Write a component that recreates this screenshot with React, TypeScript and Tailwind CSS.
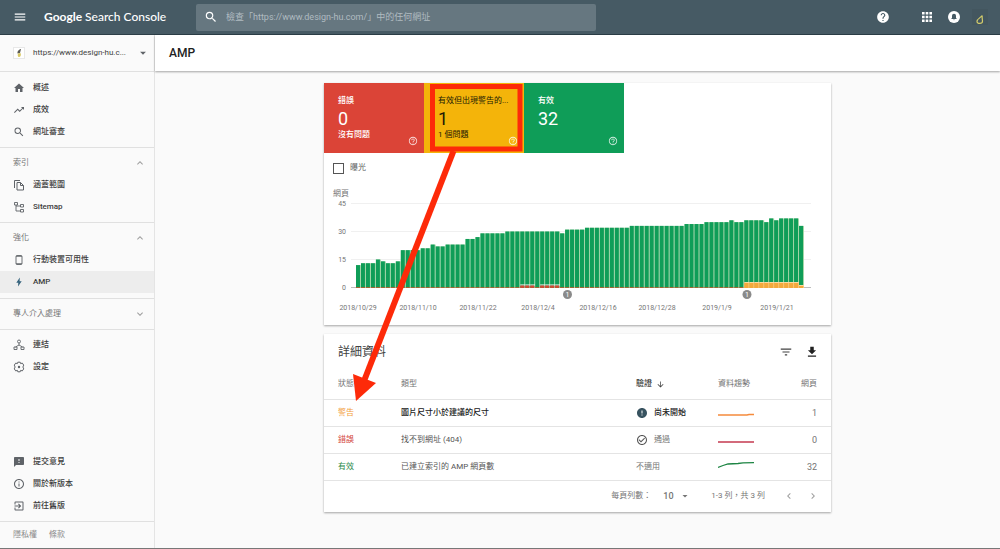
import type { ReactNode } from 'react'
import {
	MdArrowDownward,
	MdArrowDropDown,
	MdCheckCircleOutline,
	MdChevronLeft,
	MdChevronRight,
	MdError,
	MdExitToApp,
	MdExpandLess,
	MdExpandMore,
	MdFeedback,
	MdFileDownload,
	MdFilterList,
	MdHelp,
	MdHelpOutline,
	MdHome,
	MdInfoOutline,
	MdMenu,
	MdSearch,
	MdTrendingUp,
} from 'react-icons/md'

const repeat = (value: number, times: number) => Array<number>(times).fill(value)

// Total pages per day, 2018/10/29 - 2019/1/26
const totals = [
	12, 13, 13, 13, 15, 14, 13, 13, 14,
	...repeat(20, 4), ...repeat(21, 2), 23, 22, 22, ...repeat(23, 4),
	26, 26, 27, ...repeat(29, 5), ...repeat(30, 11), 29,
	...repeat(31, 4), ...repeat(32, 9), ...repeat(33, 11), ...repeat(34, 4),
	...repeat(35, 5), 36, 35, 35, ...repeat(36, 4), 35, 37, 36, ...repeat(37, 4), 33,
]

const errorDays = [33, 34, 35, 37, 38, 39, 40]
const FIRST_WARNING_DAY = 78

const dateLabels = [
	{ x: 34, text: '2018/10/29' },
	{ x: 94, text: '2018/11/10' },
	{ x: 154, text: '2018/11/22' },
	{ x: 214, text: '2018/12/4' },
	{ x: 274, text: '2018/12/16' },
	{ x: 333, text: '2018/12/28' },
	{ x: 393, text: '2019/1/9' },
	{ x: 453, text: '2019/1/21' },
]

const SitemapIcon = () => (
	<svg viewBox="0 0 12 12" className="h-3 w-3" fill="none" stroke="currentColor" strokeWidth="0.9">
		<path d="M1.5 1.5h3v2.5h-3zM7.5 3.5h3v2.5h-3zM7.5 8.5h3v2.5h-3zM3 4v6h4.5M3 5h4.5" />
	</svg>
)

const CoverageIcon = () => (
	<svg viewBox="0 0 12 12" className="h-3 w-3" fill="none" stroke="currentColor" strokeWidth="1">
		<path d="M1.5 9V1.5H7M4 3.5h3.5L10.5 6.500v4.500H4zM7.500 3.500v3h3" />
	</svg>
)

const PhoneIcon = () => (
	<svg viewBox="0 0 12 12" className="h-3 w-3" fill="none" stroke="currentColor" strokeWidth="0.9">
		<rect x="3" y="1.500" width="6" height="9" rx="1" />
		<path d="M3 2.300h6M3 9.700h6" />
	</svg>
)

const BoltIcon = () => (
	<svg viewBox="0 0 12 12" className="h-3 w-3 text-[#34627c]" fill="currentColor">
		<path d="M6.800 1.500 3.300 6.700h2L5 10.500 8.700 5.300H6.600z" />
	</svg>
)

const LinksIcon = () => (
	<svg viewBox="0 0 12 12" className="h-3 w-3" fill="none" stroke="currentColor" strokeWidth="0.9">
		<circle cx="6" cy="2.500" r="1.500" />
		<path d="M1 8h3v2.500H1zM8 8h3v2.500H8zM6 4v2.200M2.500 8 6 6l3.500 2" />
	</svg>
)

const SettingsIcon = () => (
	<svg viewBox="0 0 12 12" className="h-3 w-3" fill="none" stroke="currentColor" strokeWidth="1">
		<path d="M4.800 1.200h2.400l.4 1.400 1.700-.5 1.400 2L9.900 6l.8 1.900-1.400 2-1.700-.5-.4 1.400H4.800l-.4-1.400-1.700.5-1.400-2L2.100 6l-.8-1.900 1.400-2 1.700.5z" />
		<circle cx="6" cy="6" r="1.200" fill="currentColor" stroke="none" />
	</svg>
)

interface NavItemProps {
	icon: ReactNode
	label: string
	active?: boolean
}

const NavItem = ({ icon, label, active = false }: NavItemProps) => (
	<a
		href="#"
		className={`flex h-[22px] items-center gap-2 pl-[13px] font-medium text-[#3c3c3c] ${active ? 'bg-[#ededed]' : ''}`}
	>
		<span className="flex w-3 justify-center text-[#5f6368]">{icon}</span>
		{label}
	</a>
)

const NavHeading = ({ label, open = true }: { label: string; open?: boolean }) => (
	<button className="flex h-[22px] w-full items-center justify-between pl-[13px] pr-2 text-[#757575]">
		{label}
		{open
			? <MdExpandLess className="h-3 w-3 text-[#9e9e9e]" />
			: <MdExpandMore className="h-3 w-3 text-[#9e9e9e]" />}
	</button>
)

interface TileProps {
	title: string
	count: number
	note?: string
	className: string
}

const Tile = ({ title, count, note, className }: TileProps) => (
	<button className={`relative flex h-[70px] w-[100px] flex-col px-[14px] pt-3 text-left ${className}`}>
		<span className="whitespace-nowrap leading-3">{title}</span>
		<span className="text-lg font-normal leading-6">{count}</span>
		<span className="leading-2">{note}</span>
		<MdHelpOutline className="absolute bottom-[7px] right-[6px] h-[10px] w-[10px] text-white/80" />
	</button>
)

const Chart = () => {
	const barWidth = 448 / totals.length
	const unit = 84 / 45

	return (
		<svg viewBox="0 0 507 125" className="block w-full" fontFamily="Roboto, sans-serif" fontSize="7" fill="#757575">
			{[45, 30, 15, 0].map((tick) => (
				<g key={tick}>
					<line x1="27" x2="487" y1={87.5 - tick * unit} y2={87.5 - tick * unit} stroke={tick ? '#f0f0f0' : '#bdbdbd'} />
					<text x="22" y={90 - tick * unit} textAnchor="end">{tick}</text>
				</g>
			))}
			{totals.map((total, i) => {
				const x = 32 + i * barWidth
				const hasError = errorDays.includes(i)
				const warning = i < FIRST_WARNING_DAY ? 0 : i === totals.length - 1 ? 2 : 5
				return (
					<g key={i}>
						<rect x={x} y={87.5 - total * unit} width={barWidth} height={total * unit} fill="#a5d6a7" />
						<rect x={x} y={87.5 - total * unit} width={barWidth - 1} height={total * unit} fill="#0f9d58" />
						<rect x={x} y="87" width={barWidth - 1} height="1" fill="#a1662f" />
						{hasError && <rect x={x} y="84.5" width={barWidth} height="1" fill="#fff" />}
						{hasError && <rect x={x} y="85.5" width={barWidth - 0.9} height="2" fill="#db4437" />}
						{warning > 0 && <rect x={x} y={87 - warning} width={barWidth} height={warning + 1} fill="#fbd9a0" />}
						{warning > 0 && <rect x={x} y={88 - warning} width={barWidth - 0.6} height={warning} fill="#f4a93c" />}
					</g>
				)
			})}
			{[243.5, 423].map((x) => (
				<g key={x}>
					<circle cx={x} cy="94.5" r="4.500" fill="#8a8a8a" />
					<text x={x} y="97" textAnchor="middle" fill="#fff">1</text>
				</g>
			))}
			{dateLabels.map((label) => (
				<text key={label.text} x={label.x} y="110" textAnchor="middle">{label.text}</text>
			))}
		</svg>
	)
}

const Trend = ({ color, points }: { color: string; points: string }) => (
	<svg viewBox="0 0 36 10" className="block h-[10px] w-9" fill="none">
		<polyline points={points} stroke={color} strokeWidth="1.300" />
	</svg>
)

const rows = [
	{
		status: '警告',
		statusClass: 'text-[#f29c38]',
		type: '圖片尺寸小於建議的尺寸',
		typeClass: 'font-medium text-[#212121]',
		check: <><MdError className="h-3 w-3 text-[#37525f]" /><span className="font-medium text-[#212121]">尚未開始</span></>,
		trend: <Trend color="#f58b3c" points="0,7 29,7 31,6.500 36,6.500" />,
		pages: 1,
	},
	{
		status: '錯誤',
		statusClass: 'text-[#d3453c]',
		type: '找不到網址 (404)',
		typeClass: 'text-[#555]',
		check: <><MdCheckCircleOutline className="h-3 w-3 text-[#555]" />通過</>,
		trend: <Trend color="#c5394f" points="0,7 36,7" />,
		pages: 0,
	},
	{
		status: '有效',
		statusClass: 'text-[#2c8a4b]',
		type: '已建立索引的 AMP 網頁數',
		typeClass: 'text-[#555]',
		check: '不適用',
		trend: <Trend color="#1e8544" points="0,5.500 5,3.500 10,2 20,1.500 25,.8 36,.7" />,
		pages: 32,
	},
]

const TopBar = () => (
	<header className="flex h-[35px] shrink-0 items-center border-b border-[#2c3e47] bg-[#465a64] text-white">
		<button aria-label="選單" className="ml-[13px] w-[14px]">
			<MdMenu className="h-[14px] w-[14px]" />
		</button>
		<h1 className="ml-[17px] w-[152px] whitespace-nowrap font-[Lato] text-xs font-bold">
			Google <span className="font-medium">Search Console</span>
		</h1>
		<label className="flex h-[27px] max-w-[400px] flex-1 items-center gap-2 rounded-xs bg-[#667780] pl-2">
			<MdSearch className="h-[14px] w-[14px]" />
			<input
				type="search"
				aria-label="檢查網址"
				placeholder="檢查「https://www.design-hu.com/」中的任何網址"
				className="flex-1 bg-transparent text-[9px] outline-none placeholder:text-[#b0bbc0]"
			/>
		</label>
		<div className="ml-auto flex items-center pr-3">
			<button aria-label="說明"><MdHelp className="h-[14px] w-[14px]" /></button>
			<button aria-label="應用程式" className="ml-8">
				<svg viewBox="0 0 10 10" className="h-[10px] w-[10px]" fill="currentColor">
					<path d="M0 0h2.600v2.600H0zM3.700 0h2.600v2.600H3.700zM7.400 0H10v2.600H7.400zM0 3.700h2.600v2.600H0zM3.700 3.700h2.600v2.600H3.700zM7.400 3.700H10v2.600H7.400zM0 7.400h2.600V10H0zM3.700 7.400h2.600V10H3.700zM7.400 7.400H10V10H7.400z" />
				</svg>
			</button>
			<button aria-label="通知" className="ml-4">
				<svg viewBox="0 0 12 12" className="h-3 w-3">
					<circle cx="6" cy="6" r="6" fill="#fff" />
					<path d="M6 2.700a2 2 0 0 1 2 2v2.200l.8.800v.4H3.200v-.4l.8-.8V4.700a2 2 0 0 1 2-2zM5.300 8.500h1.400a.7.700 0 0 1-1.400 0z" fill="#465a64" />
				</svg>
			</button>
			<button aria-label="帳戶" className="ml-3">
				<svg viewBox="0 0 16 16" className="h-4 w-4">
					<rect width="16" height="16" fill="#43565f" />
					<path d="M10.200 6.500C9 8.500 5 9.800 5 12.500c0 2.800 5.500 2.500 5.500-.3 0-1.700-.6-3.200-.3-5.700" fill="none" stroke="#d3cc6b" strokeWidth="1.200" />
				</svg>
			</button>
		</div>
	</header>
)

const Sidebar = () => (
	<nav className="flex w-[155px] shrink-0 flex-col border-r border-[#e4e4e4] bg-[#fafafa]">
		<button className="flex h-[37px] items-center border-b border-[#e0e0e0] pl-[13px] pr-1 text-[#424242]">
			<svg viewBox="0 0 12 12" className="mr-2 h-3 w-3">
				<rect x=".5" y=".5" width="11" height="11" fill="#fff" stroke="#e8e8e8" />
				<path d="M8 2C7 2 4 3.500 4.500 6.500L7 6z" fill="#5b5b56" />
				<path d="M5 6.500 7.500 6c1 2 0 4-1.500 4S4.500 8 5 6.500z" fill="#d8c865" />
			</svg>
			<span className="flex-1 whitespace-nowrap text-left">https://www.design-hu.c...</span>
			<MdArrowDropDown className="h-[14px] w-[14px] text-[#5f6368]" />
		</button>

		<div className="border-b border-[#e0e0e0] pb-1 pt-[5px]">
			<NavItem icon={<MdHome className="h-3 w-3" />} label="概述" />
			<NavItem icon={<MdTrendingUp className="h-3 w-3" />} label="成效" />
			<NavItem icon={<MdSearch className="h-3 w-3" />} label="網址審查" />
		</div>
		<div className="border-b border-[#e0e0e0] py-1">
			<NavHeading label="索引" />
			<NavItem icon={<CoverageIcon />} label="涵蓋範圍" />
			<NavItem icon={<SitemapIcon />} label="Sitemap" />
		</div>
		<div className="border-b border-[#e0e0e0] pb-[5px] pt-1">
			<NavHeading label="強化" />
			<NavItem icon={<PhoneIcon />} label="行動裝置可用性" />
			<NavItem icon={<BoltIcon />} label="AMP" active />
		</div>
		<div className="border-b border-[#e0e0e0] py-1">
			<NavHeading label="專人介入處理" open={false} />
		</div>
		<div className="py-1">
			<NavItem icon={<LinksIcon />} label="連結" />
			<NavItem icon={<SettingsIcon />} label="設定" />
		</div>

		<div className="mt-auto border-b border-[#e0e0e0] py-1">
			<NavItem icon={<MdFeedback className="h-3 w-3" />} label="提交意見" />
			<NavItem icon={<MdInfoOutline className="h-3 w-3" />} label="關於新版本" />
			<NavItem icon={<MdExitToApp className="h-3 w-3" />} label="前往舊版" />
		</div>
		<div className="flex h-[26px] items-center gap-3 pl-[13px] text-[#8a8a8a]">
			<a href="#">隱私權</a>
			<a href="#">條款</a>
		</div>
	</nav>
)

const SummaryCard = () => (
	<section className="bg-white shadow-[0_1px_2px_rgba(0,0,0,0.35)]">
		<div className="flex">
			<Tile title="錯誤" count={0} note="沒有問題" className="bg-[#db4437] font-medium text-white" />
			<Tile title="有效但出現警告的..." count={1} note="1 個問題" className="bg-[#f4b40a] text-[#211a05]" />
			<Tile title="有效" count={32} className="bg-[#0f9d58] font-medium text-white" />
		</div>
		<label className="ml-[9px] mt-[9px] flex h-3 w-fit items-center gap-[6px] text-[#616161]">
			<input type="checkbox" className="h-[11px] w-[11px] appearance-none border border-[#555] bg-white" />
			曝光
		</label>
		<p className="ml-[9px] mt-[14px] leading-3 text-[#757575]">網頁</p>
		<Chart />
	</section>
)

const DetailCard = () => (
	<section className="mt-[9px] bg-white shadow-[0_1px_2px_rgba(0,0,0,0.35)]">
		<div className="flex h-9 items-center pl-[14px] pr-3 text-[#424242]">
			<h3 className="flex-1 text-xs">詳細資料</h3>
			<button aria-label="篩選" className="mr-3"><MdFilterList className="h-[14px] w-[14px]" /></button>
			<button aria-label="下載"><MdFileDownload className="h-[14px] w-[14px] text-[#212121]" /></button>
		</div>
		<table className="w-full table-fixed text-left text-[#757575]">
			<thead>
				<tr className="h-[29px]">
					<th className="w-[77px] pl-[14px] font-normal">狀態</th>
					<th className="font-normal">類型</th>
					<th className="w-[82px] font-medium text-[#424242]">
						<span className="flex items-center gap-1">驗證<MdArrowDownward className="h-[9px] w-[9px]" /></span>
					</th>
					<th className="w-[60px] font-normal">資料趨勢</th>
					<th className="w-[53px] pr-[14px] text-right font-normal">網頁</th>
				</tr>
			</thead>
			<tbody>
				{rows.map((row) => (
					<tr key={row.status} className="h-[27px] border-y border-[#e4e4e4]">
						<td className={`pl-[14px] ${row.statusClass}`}>{row.status}</td>
						<td className={row.typeClass}>{row.type}</td>
						<td><span className="flex items-center gap-[6px]">{row.check}</span></td>
						<td>{row.trend}</td>
						<td className="pr-[14px] text-right text-[9px]">{row.pages}</td>
					</tr>
				))}
			</tbody>
		</table>
		<div className="flex h-[31px] items-center justify-end pr-3 text-[#757575]">
			<label htmlFor="page-size">每頁列數：</label>
			<span className="relative ml-3 flex items-center">
				<select id="page-size" className="w-7 appearance-none bg-transparent text-[9px] font-medium">
					<option>10</option>
				</select>
				<MdArrowDropDown className="pointer-events-none absolute right-0 h-3 w-3" />
			</span>
			<span className="ml-5">1-3 列，共 3 列</span>
			<button aria-label="上一頁" className="ml-[18px] text-[#9e9e9e]"><MdChevronLeft className="h-3 w-3" /></button>
			<button aria-label="下一頁" className="ml-3 text-[#9e9e9e]"><MdChevronRight className="h-3 w-3" /></button>
		</div>
	</section>
)

// Red frame round the warning tile with an arrow down to the warning row
const Annotation = () => (
	<svg viewBox="0 0 507 430" className="pointer-events-none absolute left-0 top-0 w-full" fill="none">
		<rect x="108.500" y="3.500" width="87.500" height="62.500" stroke="#fd2a09" strokeWidth="5" />
		<path d="M129.500 68 40 298" stroke="#fd2a09" strokeWidth="6" />
		<path d="M29 291 52 300 32 318z" fill="#fd2a09" />
	</svg>
)

const App = () => (
	<div className="flex min-h-screen flex-col border-b border-[#777] bg-[#fafafa] font-[Roboto,'Noto_Sans_CJK_TC',sans-serif] text-[8px] leading-3">
		<TopBar />
		<div className="flex flex-1">
			<Sidebar />
			<main className="min-w-0 flex-1">
				<h2 className="relative flex h-9 items-center bg-white pl-[14px] text-xs font-medium text-[#212121] shadow-[0_1px_2px_rgba(0,0,0,0.35)]">
					AMP
				</h2>
				<div className="relative mx-auto mt-3 max-w-[507px]">
					<SummaryCard />
					<DetailCard />
					<Annotation />
				</div>
			</main>
		</div>
	</div>
)

export default App
